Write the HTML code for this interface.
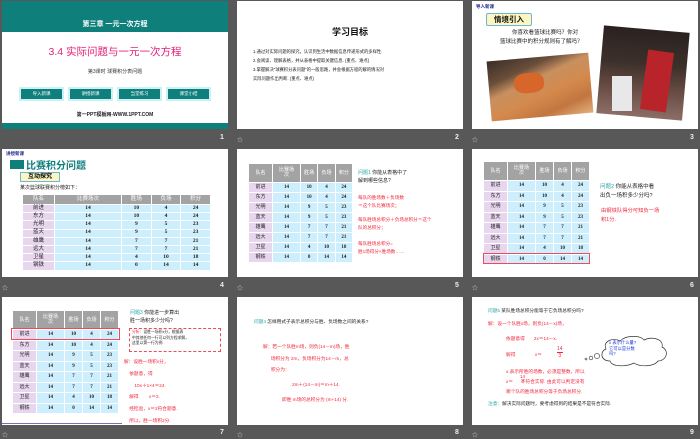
<!DOCTYPE html>
<html><head><meta charset="utf-8"><style>
*{margin:0;padding:0;box-sizing:border-box}
body{width:700px;height:437px;background:#585858;position:relative;overflow:hidden;font-family:"Liberation Sans","Noto Sans CJK SC",sans-serif}
.s{position:absolute;background:#fff;width:226px;height:128px;overflow:hidden}
.a{position:absolute;white-space:nowrap}
.n{position:absolute;color:#eee;font-size:7px;font-weight:bold}
.st{position:absolute;color:#ccc;font-size:6px}
.btn{position:absolute;top:88px;width:41px;height:10px;background:#0f7f7c;box-shadow:0 0 0 2px #c8f2f5;color:#fff;font-size:4.5px;line-height:10px;text-align:center}
table{position:absolute;border-collapse:collapse;table-layout:fixed;font-family:"Liberation Serif","Noto Serif CJK SC",serif;font-weight:bold;text-align:center}
td{border:1px solid #fff;background:#cdeefc;padding:0;color:#222;line-height:1}
td.f{background:#e8d6ef;font-family:"Liberation Sans","Noto Sans CJK SC",sans-serif;font-weight:normal}
tr.h td{background:#a3a3a3;color:#fff;font-family:"Liberation Sans","Noto Sans CJK SC",sans-serif;font-weight:normal}
.t5 tr{height:10px}.t5 tr.h{height:19px}
.t6 tr{height:10.5px}.t6 tr.h{height:19px}
.t4 tr{height:8.2px}.t4 tr.h{height:10px}
.r{color:#f0283c}.t{color:#2aa3a8}
</style></head><body>

<!-- Slide 1 -->
<div class="s" style="left:2px;top:1px">
 <div class="a" style="left:0;top:0;width:226px;height:31px;background:#0f7f7c"></div>
 <div class="a" style="left:0;top:18px;width:226px;text-align:center;color:#fff;font-size:7px;font-weight:bold">第三章 一元一次方程</div>
 <div class="a" style="left:0;top:43px;width:226px;text-align:center;color:#e3207a;font-size:10.5px">3.4 实际问题与一元一次方程</div>
 <div class="a" style="left:0;top:67px;width:226px;text-align:center;color:#333;font-size:5px">第3课时 球赛积分表问题</div>
 <div class="btn" style="left:19px">导入新课</div>
 <div class="btn" style="left:68px">讲授新课</div>
 <div class="btn" style="left:117px">当堂练习</div>
 <div class="btn" style="left:166px">课堂小结</div>
 <div class="a" style="left:0;top:110px;width:226px;text-align:center;color:#222;font-size:5px;font-weight:bold">第一PPT模板网-WWW.1PPT.COM</div>
 <div class="a" style="left:0;top:122px;width:226px;height:6px;background:#0f7f7c"></div>
</div>
<div class="n" style="left:220px;top:134px">1</div>
<div class="st" style="left:237px;top:135px">☆</div>

<!-- Slide 2 -->
<div class="s" style="left:237px;top:1px">
 <div class="a" style="left:0;top:24px;width:226px;text-align:center;color:#111;font-size:9px;font-weight:bold">学习目标</div>
 <div class="a" style="left:16px;top:46px;font-size:4.3px;color:#222;line-height:9px">1.通过对实际问题的探究，认识到生活中数据信息传递形式的多样性.<br>2.会阅读、理解表格，并从表格中提取关键信息. (重点、难点)<br>3.掌握解决“球赛积分表问题”的一般思路，并会根据方程的解的情况对<br>实际问题作出判断. (重点、难点)</div>
</div>
<div class="n" style="left:455px;top:134px">2</div>
<div class="st" style="left:472px;top:135px">☆</div>

<!-- Slide 3 -->
<div class="s" style="left:472px;top:1px">
 <div class="a" style="left:4px;top:3px;font-size:4.5px;color:#1c2a8a;font-weight:bold">导入新课</div>
 <div class="a" style="left:14px;top:12px;width:46px;height:13px;background:#fdf6c0;border:1px solid #6bb7dc;border-radius:2px;font-size:7.5px;font-weight:bold;color:#111;text-align:center;line-height:11px">情境引入</div>
 <div class="a" style="left:28px;top:28px;font-size:5.5px;color:#222;line-height:9px;text-align:center">&nbsp;&nbsp;&nbsp;&nbsp;&nbsp;你喜欢看篮球比赛吗？你对<br>篮球比赛中的积分规则有了解吗？</div>
 <div class="a" style="left:17px;top:56px;width:102px;height:60px;transform:rotate(-5deg);background:linear-gradient(160deg,#3a2e28 0%,#6a4e3a 25%,#c89060 40%,#d48a4c 60%,#c27640 80%,#e1b07e 100%)"></div>
 <div class="a" style="left:42px;top:72px;width:30px;height:20px;transform:rotate(-5deg);background:#d7662a;border-radius:40%"></div>
 <div class="a" style="left:128px;top:28px;width:86px;height:88px;transform:rotate(5deg);background:linear-gradient(180deg,#2a2220 0%,#3d302b 40%,#6a4e45 70%,#8c6e66 100%)"></div>
 <div class="a" style="left:172px;top:50px;width:26px;height:60px;transform:rotate(8deg);background:#b8242a"></div>
 <div class="a" style="left:140px;top:75px;width:20px;height:35px;background:#e8e8ea"></div>
</div>
<div class="n" style="left:690px;top:134px">3</div>

<!-- Slide 4 -->
<div class="s" style="left:2px;top:149px">
 <div class="a" style="left:4px;top:2px;font-size:4.5px;color:#1c2a8a;font-weight:bold">讲授新课</div>
 <div class="a" style="left:8px;top:11px;width:14px;height:9px;background:#0f7f7c"></div>
 <div class="a" style="left:24px;top:8px;font-size:10px;color:#0f7f7c;font-weight:bold">比赛积分问题</div>
 <div class="a" style="left:18px;top:23px;width:40px;height:10px;background:#fdf6c0;border:1px solid #6bb7dc;font-size:6px;font-weight:bold;text-align:center;line-height:8px">互动探究</div>
 <div class="a" style="left:18px;top:35px;font-size:5px;color:#222">某次篮球联赛积分榜如下：</div>
 <table class="t4" style="left:20px;top:45px;width:189px;font-size:5.5px">
  <tr class="h"><td style="width:32px">队名</td><td style="width:67px">比赛场次</td><td>胜场</td><td>负场</td><td>积分</td></tr>
  <tr><td class="f">前进</td><td>14</td><td>10</td><td>4</td><td>24</td></tr>
  <tr><td class="f">东方</td><td>14</td><td>10</td><td>4</td><td>24</td></tr>
  <tr><td class="f">光明</td><td>14</td><td>9</td><td>5</td><td>23</td></tr>
  <tr><td class="f">蓝天</td><td>14</td><td>9</td><td>5</td><td>23</td></tr>
  <tr><td class="f">雄鹰</td><td>14</td><td>7</td><td>7</td><td>21</td></tr>
  <tr><td class="f">远大</td><td>14</td><td>7</td><td>7</td><td>21</td></tr>
  <tr><td class="f">卫星</td><td>14</td><td>4</td><td>10</td><td>18</td></tr>
  <tr><td class="f">钢铁</td><td>14</td><td>0</td><td>14</td><td>14</td></tr>
 </table>
</div>
<div class="st" style="left:2px;top:283px">☆</div>
<div class="n" style="left:220px;top:282px">4</div>
<div class="st" style="left:237px;top:283px">☆</div>

<!-- Slide 5 -->
<div class="s" style="left:237px;top:149px">
 <table class="t5" style="left:11px;top:14px;width:105px;font-size:5px">
  <tr class="h"><td style="width:24px">队名</td><td style="width:28px">比赛场<br>次</td><td>胜场</td><td>负场</td><td>积分</td></tr>
  <tr><td class="f">前进</td><td>14</td><td>10</td><td>4</td><td>24</td></tr>
  <tr><td class="f">东方</td><td>14</td><td>10</td><td>4</td><td>24</td></tr>
  <tr><td class="f">光明</td><td>14</td><td>9</td><td>5</td><td>23</td></tr>
  <tr><td class="f">蓝天</td><td>14</td><td>9</td><td>5</td><td>23</td></tr>
  <tr><td class="f">雄鹰</td><td>14</td><td>7</td><td>7</td><td>21</td></tr>
  <tr><td class="f">远大</td><td>14</td><td>7</td><td>7</td><td>21</td></tr>
  <tr><td class="f">卫星</td><td>14</td><td>4</td><td>10</td><td>18</td></tr>
  <tr><td class="f">钢铁</td><td>14</td><td>0</td><td>14</td><td>14</td></tr>
 </table>
 <div class="a" style="left:121px;top:20px;font-size:5px;line-height:8px;color:#222"><span class="t">问题1</span> 你能从表格中了<br>解到哪些信息?</div>
 <div class="a r" style="left:121px;top:45px;font-size:4.6px;line-height:8px">每队的胜场数＋负场数<br>＝这个队比赛场次；</div>
 <div class="a r" style="left:121px;top:67px;font-size:4.6px;line-height:8px">每队胜场总积分＋负场总积分＝这个<br>队的总积分；</div>
 <div class="a r" style="left:121px;top:91px;font-size:4.6px;line-height:8px">每队胜场总积分=<br>胜1场得分×胜场数……</div>
</div>
<div class="n" style="left:455px;top:282px">5</div>
<div class="st" style="left:472px;top:283px">☆</div>

<!-- Slide 6 -->
<div class="s" style="left:472px;top:149px">
 <table class="t6" style="left:11px;top:12px;width:107px;font-size:5px">
  <tr class="h"><td style="width:24px">队名</td><td style="width:28px">比赛场<br>次</td><td>胜场</td><td>负场</td><td>积分</td></tr>
  <tr><td class="f">前进</td><td>14</td><td>10</td><td>4</td><td>24</td></tr>
  <tr><td class="f">东方</td><td>14</td><td>10</td><td>4</td><td>24</td></tr>
  <tr><td class="f">光明</td><td>14</td><td>9</td><td>5</td><td>23</td></tr>
  <tr><td class="f">蓝天</td><td>14</td><td>9</td><td>5</td><td>23</td></tr>
  <tr><td class="f">雄鹰</td><td>14</td><td>7</td><td>7</td><td>21</td></tr>
  <tr><td class="f">远大</td><td>14</td><td>7</td><td>7</td><td>21</td></tr>
  <tr><td class="f">卫星</td><td>14</td><td>4</td><td>10</td><td>18</td></tr>
  <tr><td class="f">钢铁</td><td>14</td><td>0</td><td>14</td><td>14</td></tr>
 </table>
 <div class="a" style="left:11px;top:104px;width:107px;height:11px;border:1px solid #ef4a5a"></div>
 <div class="a" style="left:128px;top:34px;font-size:5.5px;line-height:9px;color:#222"><span class="t">问题2</span> 你能从表格中看<br>出负一场积多少分吗?</div>
 <div class="a r" style="left:129px;top:58px;font-size:5.3px;line-height:9px">由钢铁队得分可知负一场<br>积1分.</div>
</div>
<div class="n" style="left:690px;top:282px">6</div>

<!-- Slide 7 -->
<div class="s" style="left:2px;top:297px">
 <table class="t6" style="left:10px;top:13px;width:107px;font-size:5px">
  <tr class="h"><td style="width:24px">队名</td><td style="width:28px">比赛场<br>次</td><td>胜场</td><td>负场</td><td>积分</td></tr>
  <tr><td class="f">前进</td><td>14</td><td>10</td><td>4</td><td>24</td></tr>
  <tr><td class="f">东方</td><td>14</td><td>10</td><td>4</td><td>24</td></tr>
  <tr><td class="f">光明</td><td>14</td><td>9</td><td>5</td><td>23</td></tr>
  <tr><td class="f">蓝天</td><td>14</td><td>9</td><td>5</td><td>23</td></tr>
  <tr><td class="f">雄鹰</td><td>14</td><td>7</td><td>7</td><td>21</td></tr>
  <tr><td class="f">远大</td><td>14</td><td>7</td><td>7</td><td>21</td></tr>
  <tr><td class="f">卫星</td><td>14</td><td>4</td><td>10</td><td>18</td></tr>
  <tr><td class="f">钢铁</td><td>14</td><td>0</td><td>14</td><td>14</td></tr>
 </table>
 <div class="a" style="left:9px;top:31px;width:109px;height:12px;border:1px solid #ef4a5a"></div>
 <div class="a" style="left:128px;top:12px;font-size:5px;line-height:8px;color:#222"><span class="t">问题3</span> 你能进一步算出<br>胜一场积多少分吗?</div>
 <div class="a" style="left:127px;top:31px;width:92px;height:24px;border:1px dashed #ef4a5a;font-size:3.8px;line-height:5.5px;padding:1px 2px;color:#222"><span class="r">分析：</span>设胜一场积x分，根据表<br>中其他任何一行可以列方程求解，<br>这里以第一行为例.</div>
 <div class="a r" style="left:122px;top:59px;font-size:4.7px;line-height:11.8px">解：设胜一场积x分，<br>&nbsp;&nbsp;&nbsp;&nbsp;依题意，得<br>&nbsp;&nbsp;&nbsp;&nbsp;&nbsp;&nbsp;&nbsp;&nbsp;10x＋1×4＝24.<br>&nbsp;&nbsp;&nbsp;&nbsp;解得&nbsp;&nbsp;&nbsp;&nbsp;&nbsp;&nbsp;&nbsp;&nbsp;x＝2.<br>&nbsp;&nbsp;&nbsp;&nbsp;经检验，x＝2符合题意.<br>&nbsp;&nbsp;&nbsp;&nbsp;所以，胜一场积2分.</div>
 <div class="a" style="left:0;top:126px;width:120px;height:1px;background:#7a6fb0"></div>
</div>
<div class="st" style="left:2px;top:430px">☆</div>
<div class="n" style="left:220px;top:429px">7</div>
<div class="st" style="left:237px;top:430px">☆</div>

<!-- Slide 8 -->
<div class="s" style="left:237px;top:297px">
 <div class="a" style="left:17px;top:22px;font-size:4.7px;color:#222"><span class="t">问题4</span> 怎样用式子表示总积分与胜、负场数之间的关系?</div>
 <div class="a r" style="left:26px;top:44px;font-size:4.7px;line-height:11.5px">解：若一个队胜m场，则负(14－m)场，胜<br>&nbsp;&nbsp;&nbsp;&nbsp;&nbsp;&nbsp;场积分为 2m，负场积分为14－m，总<br>&nbsp;&nbsp;&nbsp;&nbsp;&nbsp;&nbsp;积分为：</div>
 <div class="a r" style="left:55px;top:85px;font-size:4.7px">2m＋(14－m)＝m＋14.</div>
 <div class="a r" style="left:45px;top:100px;font-size:4.7px">即胜 m场的总积分为 (m+14) 分.</div>
</div>
<div class="n" style="left:455px;top:429px">8</div>
<div class="st" style="left:472px;top:430px">☆</div>

<!-- Slide 9 -->
<div class="s" style="left:472px;top:297px">
 <div class="a" style="left:16px;top:11px;font-size:4.7px;color:#222"><span class="t">问题5</span> 某队胜场总积分能等于它负场总积分吗?</div>
 <div class="a r" style="left:16px;top:24px;font-size:4.7px">解：设一个队胜x场，则负(14－x)场，</div>
 <div class="a r" style="left:34px;top:39px;font-size:4.7px">依题意得&nbsp;&nbsp;&nbsp;&nbsp;&nbsp;&nbsp;&nbsp;2x＝14－x.</div>
 <div class="a r" style="left:34px;top:55px;font-size:4.7px">解得&nbsp;&nbsp;&nbsp;&nbsp;&nbsp;&nbsp;&nbsp;&nbsp;&nbsp;&nbsp;&nbsp;&nbsp;&nbsp;&nbsp;&nbsp;x＝</div>
 <div class="a r" style="left:85px;top:49px;font-size:5px;line-height:7px;text-align:center">14<br><span style="border-top:1px solid #f0283c">&nbsp;3&nbsp;</span></div>
 <div class="a r" style="left:34px;top:70px;font-size:4.7px;line-height:10px">x 表示所胜的场数，必须是整数，所以<br>x＝&nbsp;&nbsp;&nbsp;&nbsp;&nbsp;&nbsp;不符合实际. 由此可以判定没有<br>哪个队的胜场总积分等于负场总积分.</div>
 <div class="a r" style="left:48px;top:77px;font-size:4.5px;line-height:5px;text-align:center">14<br>3</div>
 <div class="a" style="left:16px;top:104px;font-size:4.7px;color:#222"><span class="t">注意：</span>解决实际问题时，要考虑得到的结果是不是符合实际.</div>
 <svg class="a" style="left:110px;top:38px" width="100" height="34" viewBox="0 0 100 34">
  <circle cx="4" cy="24" r="1" fill="none" stroke="#333" stroke-width=".6"/>
  <circle cx="9" cy="23" r="1.8" fill="none" stroke="#333" stroke-width=".6"/>
  <circle cx="15" cy="21" r="2.6" fill="none" stroke="#333" stroke-width=".6"/>
  <path d="M24 14 C20 6 32 2 38 6 C44 0 58 0 62 5 C70 1 82 4 80 12 C88 16 84 26 76 26 C72 32 58 32 52 28 C44 32 30 32 28 26 C18 26 18 16 24 14 Z" fill="#fff" stroke="#333" stroke-width=".7"/>
 </svg>
 <div class="a" style="left:137px;top:43px;font-size:4.3px;line-height:5.5px;color:#1a3ad8">x 表示什么量?<br>它可以是分数<br>吗?</div>
</div>
<div class="n" style="left:690px;top:429px">9</div>
</body></html>
